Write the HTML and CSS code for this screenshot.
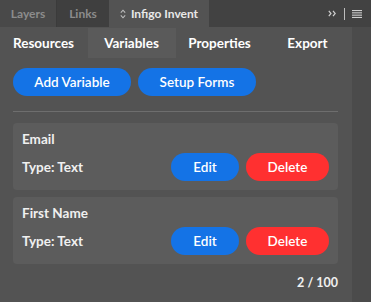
FILE: index.html
```html
<!DOCTYPE html>
<html lang="en">
<head>
    <meta charset="UTF-8">
    <meta name="viewport" content="width=device-width, initial-scale=1.0">
    <title>Infigo Invent</title>
    <link rel="stylesheet" href="styles.css">
</head>
<body>
    <div class="tabbar">
        <div class="tab tab-layers">Layers</div>
        <div class="tab tab-links">Links</div>
        <div class="tab tab-active">
            <svg class="updown" width="6" height="10" viewBox="0 0 6 10">
                <path d="M0.8 3.6 L3 1.2 L5.2 3.6 M0.8 6.4 L3 8.8 L5.2 6.4" fill="none" stroke="#bdbdbd" stroke-width="1.1"/>
            </svg>
            Infigo Invent
        </div>
        <div class="tab-tools">
            <svg width="9" height="7" viewBox="0 0 9 7">
                <path d="M0.8 0.8 L3 3.5 L0.8 6.2 M5 0.8 L7.2 3.5 L5 6.2" fill="none" stroke="#cfcfcf" stroke-width="1.2"/>
            </svg>
            <span class="pipe"></span>
            <svg width="10" height="8" viewBox="0 0 10 8">
                <rect x="0" y="0" width="10" height="1.1" fill="#cfcfcf"/>
                <rect x="0" y="2.3" width="10" height="1.1" fill="#cfcfcf"/>
                <rect x="0" y="4.6" width="10" height="1.1" fill="#cfcfcf"/>
                <rect x="0" y="6.9" width="10" height="1.1" fill="#cfcfcf"/>
            </svg>
        </div>
    </div>
    <div class="panel">
        <div class="content">
            <nav class="nav">
                <div class="nav-item">Resources</div>
                <div class="nav-item selected">Variables</div>
                <div class="nav-item">Properties</div>
                <div class="nav-item">Export</div>
            </nav>
            <div class="inner">
                <div class="actions">
                    <button class="btn btn-blue btn-wide">Add Variable</button>
                    <button class="btn btn-blue btn-wide">Setup Forms</button>
                </div>
                <hr class="sep">
                <div class="card">
                    <div class="card-title">Email</div>
                    <div class="card-row">
                        <span class="card-type">Type: Text</span>
                        <button class="btn btn-blue btn-edit">Edit</button>
                        <button class="btn btn-red btn-delete">Delete</button>
                    </div>
                </div>
                <div class="card">
                    <div class="card-title">First Name</div>
                    <div class="card-row">
                        <span class="card-type">Type: Text</span>
                        <button class="btn btn-blue btn-edit">Edit</button>
                        <button class="btn btn-red btn-delete">Delete</button>
                    </div>
                </div>
                <div class="count">2 / 100</div>
            </div>
        </div>
        <div class="scroll"></div>
    </div>
</body>
</html>
```

FILE: styles.css
```css
body {
    margin: 0;
    background: #535353;
    font-family: Lato, 'Open Sans', sans-serif;
    color: #f0f0f0;
    height: 302px;
    overflow: hidden;
}
.tabbar {
    display: flex;
    height: 27px;
    background: #424242;
    font-size: 12px;
    font-weight: bold;
}
.tab {
    display: flex;
    align-items: center;
    justify-content: center;
    color: #8c8c8c;
}
.tab-layers {
    width: 56px;
    background: #494949;
    border-right: 1px solid #3b3b3b;
}
.tab-links {
    width: 52px;
    background: #3f3f3f;
}
.tab-active {
    width: 100px;
    background: #535353;
    color: #e8e8e8;
    gap: 5px;
}
.tab-tools {
    flex: 1;
    display: flex;
    align-items: center;
    justify-content: flex-end;
    padding-right: 9px;
}
.pipe {
    width: 1px;
    height: 12px;
    background: #bdbdbd;
    margin: 0 7px 0 7px;
}
.panel {
    display: flex;
    height: 275px;
}
.content {
    width: 352px;
}
.scroll {
    flex: 1;
    background: #4b4b4b;
}
.nav {
    display: flex;
    height: 30px;
    padding-top: 1px;
}
.nav-item {
    flex: 1;
    display: flex;
    align-items: center;
    justify-content: center;
    font-size: 13.5px;
    font-weight: bold;
    color: #ffffff;
    padding-right: 1px;
}
.nav-item.selected {
    background: #5a5a5a;
}
.inner {
    padding: 10px 14px 0 13px;
}
.actions {
    display: flex;
    gap: 7px;
}
.btn {
    border: none;
    border-radius: 14px;
    height: 28px;
    font-family: inherit;
    font-size: 13.5px;
    font-weight: 600;
    color: #ffffff;
    padding: 0;
    cursor: pointer;
}
.btn-blue {
    background: #1473e6;
}
.btn-red {
    background: #ff3030;
}
.btn-wide {
    width: 118px;
}
.sep {
    border: none;
    border-top: 1px solid #6e6e6e;
    margin: 15px 0 11px 0;
}
.card {
    background: #5c5c5c;
    border-radius: 4px;
    height: 67px;
    padding: 0 9px;
    margin-bottom: 7px;
}
.card-title {
    font-size: 13.5px;
    font-weight: bold;
    padding-top: 8px;
    height: 22px;
    line-height: 16px;
}
.card-row {
    display: flex;
    align-items: center;
    height: 28px;
}
.card-type {
    flex: 1;
    font-size: 13.5px;
    font-weight: bold;
}
.btn-edit {
    width: 68px;
    margin-right: 7px;
}
.btn-delete {
    width: 83px;
}
.count {
    text-align: right;
    font-size: 12.5px;
    font-weight: bold;
    margin-top: 11px;
}
```
